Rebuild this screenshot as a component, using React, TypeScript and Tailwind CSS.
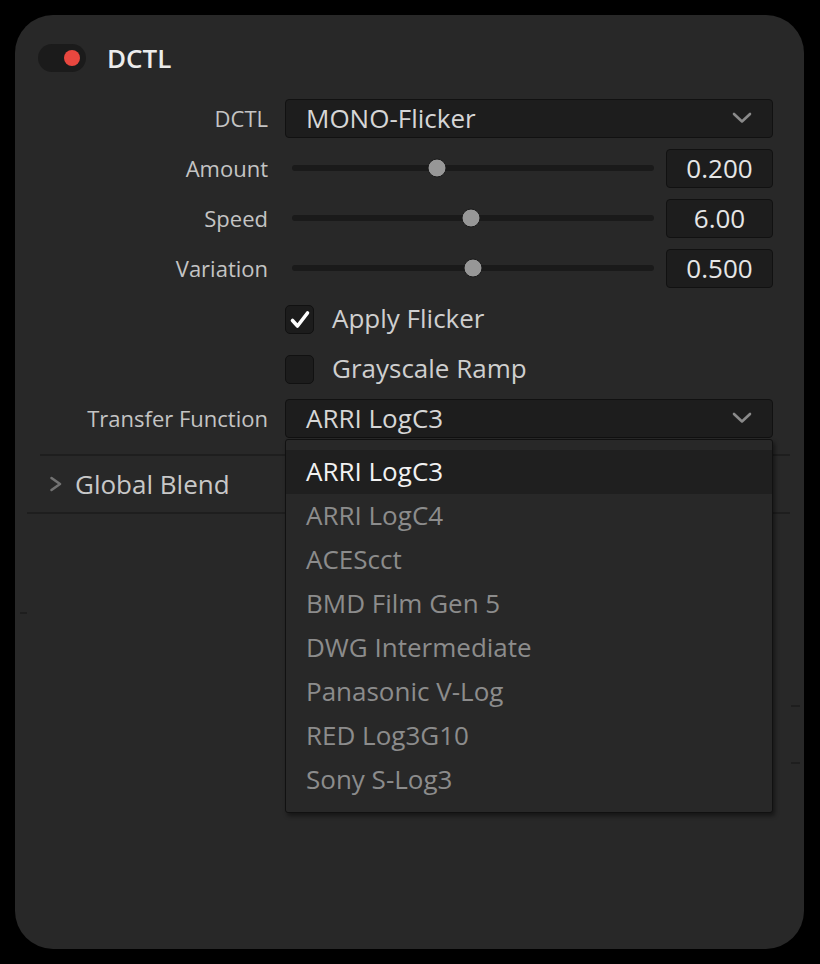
import React from "react";

const font = { fontFamily: '"Open Sans", "Noto Sans", sans-serif' };

function ChevronDown() {
  return (
    <svg width="20" height="12" viewBox="0 0 20 12" fill="none">
      <path d="M2 2 L10 9.5 L18 2" stroke="#8a8a8a" strokeWidth="2.6" strokeLinecap="round" strokeLinejoin="round" />
    </svg>
  );
}

function ChevronRight() {
  return (
    <svg width="14" height="16" viewBox="0 0 14 16" fill="none">
      <path d="M2.5 2 L11 8 L2.5 14" stroke="#727272" strokeWidth="2.6" strokeLinecap="round" strokeLinejoin="round" />
    </svg>
  );
}

function Label({ children }: { children: React.ReactNode }) {
  return (
    <div className="w-[230px] shrink-0 text-right text-[22px] text-[#c4c4c4] leading-none pb-[1px]">
      {children}
    </div>
  );
}

function Select({ value }: { value: string }) {
  return (
    <div className="flex-1 h-[39px] flex items-center justify-between bg-[#1d1d1d] border border-[#111111] rounded-[4px] pl-[20px] pr-[20px]">
      <span className="text-[26px] text-[#d6d6d6] leading-none pb-[1px]">{value}</span>
      <ChevronDown />
    </div>
  );
}

function SliderRow({ label, value, pct }: { label: string; value: string; pct: number }) {
  return (
    <div className="h-[40px] flex items-center gap-[17px]">
      <Label>{label}</Label>
      <div className="flex-1 flex items-center h-full">
        <div className="flex-1 pl-[7px] pr-[12px]">
          <div className="relative h-[6px] rounded-full bg-[#1a1a1a]">
            <div
              className="absolute top-1/2 w-[19px] h-[19px] rounded-full bg-[#979797] border-[1.5px] border-[#1b1b1b] -translate-x-1/2 -translate-y-1/2"
              style={{ left: `${pct * 100}%` }}
            />
          </div>
        </div>
        <div className="w-[107px] h-[39px] flex items-center justify-center bg-[#1d1d1d] border border-[#111111] rounded-[4px]">
          <span className="text-[26px] text-[#e6e6e6] leading-none pb-[1px]">{value}</span>
        </div>
      </div>
    </div>
  );
}

function CheckRow({ label, checked }: { label: string; checked: boolean }) {
  return (
    <div className="h-[40px] flex items-center gap-[17px] pt-[3px]">
      <div className="w-[230px] shrink-0" />
      <div className="flex items-center gap-[18px]">
        <div className="w-[29px] h-[29px] rounded-[5px] bg-[#1c1c1c] border-[1.5px] border-[#111111] flex items-center justify-center">
          {checked && (
            <svg width="22" height="22" viewBox="0 0 22 22" fill="none">
              <path d="M3.5 11.5 L8.5 17 L18.5 4" stroke="#ffffff" strokeWidth="3.6" strokeLinecap="round" strokeLinejoin="round" />
            </svg>
          )}
        </div>
        <span className="text-[26px] text-[#cfcfcf] leading-none pb-[3px]">{label}</span>
      </div>
    </div>
  );
}

const options = [
  "ARRI LogC3",
  "ARRI LogC4",
  "ACEScct",
  "BMD Film Gen 5",
  "DWG Intermediate",
  "Panasonic V-Log",
  "RED Log3G10",
  "Sony S-Log3",
];

export default function App() {
  return (
    <div className="w-[820px] h-[964px] bg-black pt-[15px] pl-[15px]" style={font}>
      <div className="relative w-[789px] h-[934px] bg-[#282828] rounded-[38px] pt-[29px] pl-[23px] pr-[31px]">
        {/* header */}
        <div className="flex items-center gap-[21px] h-[28px]">
          <div className="w-[48px] h-[28px] rounded-full bg-[#1b1b1b] flex items-center justify-end pr-[6px]">
            <div className="w-[16px] h-[16px] rounded-full bg-[#e8473f]" />
          </div>
          <span className="text-[26px] font-semibold text-[#ececec] leading-none">DCTL</span>
        </div>

        <div className="mt-[26px] flex flex-col gap-[10px]">
          <div className="h-[40px] flex items-center gap-[17px]">
            <Label>DCTL</Label>
            <Select value="MONO-Flicker" />
          </div>
          <SliderRow label="Amount" value="0.200" pct={0.4006} />
          <SliderRow label="Speed" value="6.00" pct={0.4945} />
          <SliderRow label="Variation" value="0.500" pct={0.5} />
          <CheckRow label="Apply Flicker" checked />
          <CheckRow label="Grayscale Ramp" checked={false} />
          <div className="h-[40px] flex items-center gap-[17px]">
            <Label>Transfer Function</Label>
            <div className="relative flex-1 flex">
              <Select value="ARRI LogC3" />
              <div className="absolute left-0 right-0 top-[40px] h-[374px] z-10 bg-[#282828] border border-[#111111] rounded-[3px] pt-[10px] shadow-[2px_3px_4px_rgba(0,0,0,0.45)]">
                {options.map((o, i) => (
                  <div
                    key={o}
                    className={
                      i === 0
                        ? "h-[44px] flex items-center pl-[20px] pb-[1px] bg-[#1f1f1f] text-[26px] text-[#f2f2f2] leading-none"
                        : "h-[44px] flex items-center pl-[20px] pb-[1px] text-[26px] text-[#8c8c8c] leading-none"
                    }
                  >
                    {o}
                  </div>
                ))}
              </div>
            </div>
          </div>
        </div>

        {/* Global Blend section */}
        <div className="mt-[16px] ml-[2px] mr-[-17px] h-[2px] bg-[#1e1e1e]" />
        <div className="h-[56px] flex items-center gap-[12px] pl-[11px] pb-[1px]">
          <ChevronRight />
          <span className="text-[26px] text-[#c8c8c8] leading-none">Global Blend</span>
        </div>
        <div className="ml-[-11px] mr-[-17px] h-[2px] bg-[#1e1e1e]" />

        {/* stray marks */}
        <div className="absolute left-[5px] top-[597px] w-[7px] h-[2px] bg-[#1e1e1e]" />
        <div className="absolute left-[776px] top-[690px] w-[9px] h-[2px] bg-[#1e1e1e]" />
        <div className="absolute left-[776px] top-[747px] w-[9px] h-[2px] bg-[#1e1e1e]" />
      </div>
    </div>
  );
}
